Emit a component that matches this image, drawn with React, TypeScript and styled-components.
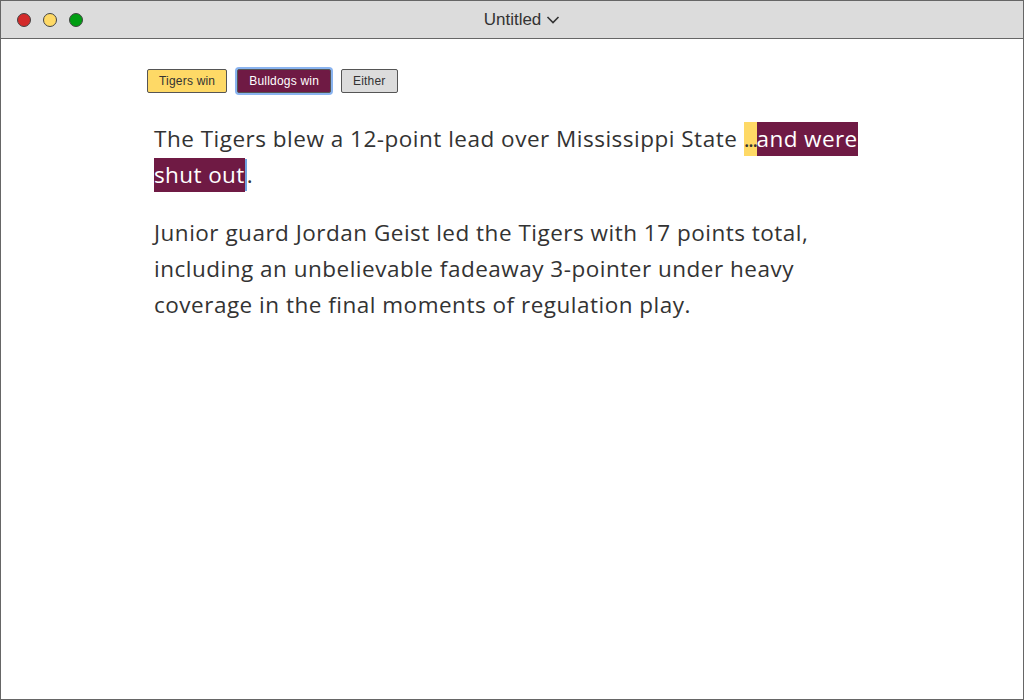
import React from "react";
import styled, { createGlobalStyle } from "styled-components";

const Global = createGlobalStyle`
  html, body { margin: 0; padding: 0; background: #fff; }
  * { box-sizing: border-box; }
`;

const Window = styled.div`
  width: 1024px;
  height: 700px;
  border: 1px solid #666;
  display: flex;
  flex-direction: column;
  background: #fff;
  overflow: hidden;
`;

const TitleBar = styled.div`
  height: 38px;
  flex: none;
  background: #dcdcdc;
  border-bottom: 1px solid #666;
  display: flex;
  align-items: center;
  position: relative;
  padding-left: 16px;
`;

const Lights = styled.div`
  display: flex;
  gap: 12px;
`;

const Light = styled.span<{ $c: string }>`
  width: 14px;
  height: 14px;
  border-radius: 50%;
  background: ${(p) => p.$c};
  border: 1px solid #444;
`;

const Title = styled.div`
  position: absolute;
  left: 0;
  right: 0;
  top: 0;
  bottom: 0;
  display: flex;
  align-items: center;
  justify-content: center;
  gap: 5px;
  padding-left: 20px;
  font-family: "Liberation Sans", Arial, sans-serif;
  font-size: 17px;
  color: #333;
  pointer-events: none;
`;

const Content = styled.div`
  padding: 30px 0 0 146px;
  display: flex;
  flex-direction: column;
`;

const ButtonRow = styled.div`
  display: flex;
  gap: 10px;
  align-items: center;
  margin-bottom: 28px;
`;

const Btn = styled.button<{ $bg: string; $fg: string; $focus?: boolean }>`
  height: 24px;
  padding: 0 11px;
  font-family: "Liberation Sans", Arial, sans-serif;
  font-size: 12px;
  letter-spacing: 0.2px;
  color: ${(p) => p.$fg};
  background: ${(p) => p.$bg};
  border: 1px solid #555;
  border-radius: 2px;
  box-shadow: ${(p) => (p.$focus ? "0 0 0 2px #8ab4f0" : "none")};
  cursor: pointer;
`;

const Text = styled.div`
  padding-left: 7px;
  width: 727px;
  font-family: "Open Sans", "Liberation Sans", Arial, sans-serif;
  font-size: 22.5px;
  letter-spacing: 0.5px;
  line-height: 36px;
  color: #333;
`;

const Para = styled.p`
  margin: 0 0 22px 0;
`;

const Mark = styled.span<{ $bg: string; $fg: string; $tight?: boolean }>`
  background: ${(p) => p.$bg};
  color: ${(p) => p.$fg};
  padding: 1px 0 2px;
  letter-spacing: ${(p) => (p.$tight ? "-1.6px" : "0.4px")};
`;

const Caret = styled.span`
  display: inline-block;
  width: 2px;
  height: 32px;
  background: #6fa3e0;
  vertical-align: middle;
  margin-top: -4px;
`;

export default function App() {
  return (
    <>
      <Global />
      <Window>
        <TitleBar>
          <Lights>
            <Light $c="#d32a2a" />
            <Light $c="#fed966" />
            <Light $c="#009e12" />
          </Lights>
          <Title>
            Untitled
            <svg width="14" height="10" viewBox="0 0 14 10">
              <path d="M1.5 2 L7 7.5 L12.5 2" fill="none" stroke="#333" strokeWidth="1.6" />
            </svg>
          </Title>
        </TitleBar>
        <Content>
          <ButtonRow>
            <Btn $bg="#fed966" $fg="#333">Tigers win</Btn>
            <Btn $bg="#6f1a44" $fg="#fff" $focus>Bulldogs win</Btn>
            <Btn $bg="#dcdcdc" $fg="#333">Either</Btn>
          </ButtonRow>
          <Text>
            <Para>
              The Tigers blew a 12-point lead over Mississippi State{" "}
              <Mark $bg="#fed966" $fg="#333" $tight>...</Mark>
              <Mark $bg="#6f1a44" $fg="#fff">and were shut out</Mark>
              <Caret />.
            </Para>
            <Para>
              Junior guard Jordan Geist led the Tigers with 17 points total,
              including an unbelievable fadeaway 3-pointer under heavy
              coverage in the final moments of regulation play.
            </Para>
          </Text>
        </Content>
      </Window>
    </>
  );
}
